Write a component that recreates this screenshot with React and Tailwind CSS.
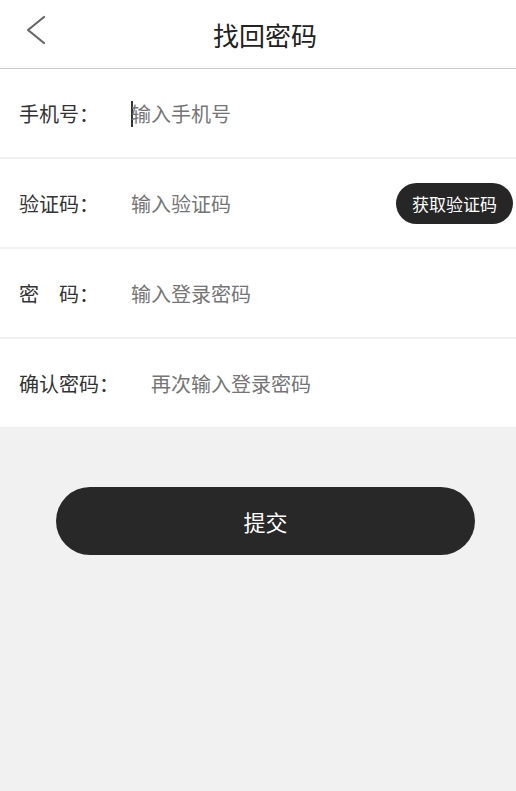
import React from "react";

const font = { fontFamily: '"Noto Sans CJK SC", "Noto Sans", sans-serif' };

function Row({ label, placeholder, caret, inputClass, right }) {
  return (
    <div className="flex h-[90px] items-center border-b-2 border-[#f0f0f0] bg-white pl-[19px] pt-[1px]">
      <span className="shrink-0 text-[20px] text-[#333333]">{label}</span>
      <div className={`flex min-w-0 flex-1 items-center ${inputClass}`}>
        {caret && <span className="mr-[-2px] h-[26px] w-[2px] shrink-0 bg-[#333333]" />}
        <input
          className="min-w-0 flex-1 bg-transparent text-[20px] text-[#333] outline-none placeholder:text-[#757575]"
          placeholder={placeholder}
          style={font}
        />
      </div>
      {right}
    </div>
  );
}

export default function App() {
  return (
    <div className="min-h-[791px] w-full bg-[#f1f1f1]" style={font}>
      <div className="relative flex h-[69px] items-center justify-center border-b border-[#cccccc] bg-white">
        <svg className="absolute left-[24px] top-[14px]" width="24" height="32" viewBox="0 0 24 32" fill="none">
          <path d="M20 3 L4 16 L20 29" stroke="#666666" strokeWidth="2.2" strokeLinecap="round" strokeLinejoin="round" />
        </svg>
        <h1 className="ml-[14px] text-[26px] text-[#222222]">找回密码</h1>
      </div>
      <Row label="手机号：" placeholder="输入手机号" caret inputClass="ml-[32px]" />
      <Row
        label="验证码："
        placeholder="输入验证码"
        inputClass="ml-[32px]"
        right={
          <button className="mr-[3px] h-[41px] w-[117px] shrink-0 rounded-full bg-[#262626] text-[17px] text-white">
            获取验证码
          </button>
        }
      />
      <Row label="密　码：" placeholder="输入登录密码" inputClass="ml-[32px]" />
      <Row label="确认密码：" placeholder="再次输入登录密码" inputClass="ml-[32px]" />
      <div className="pt-[58px]">
        <button className="ml-[56px] flex h-[68px] w-[419px] items-center justify-center rounded-full bg-[#282828] text-[22px] text-white">
          提交
        </button>
      </div>
    </div>
  );
}
